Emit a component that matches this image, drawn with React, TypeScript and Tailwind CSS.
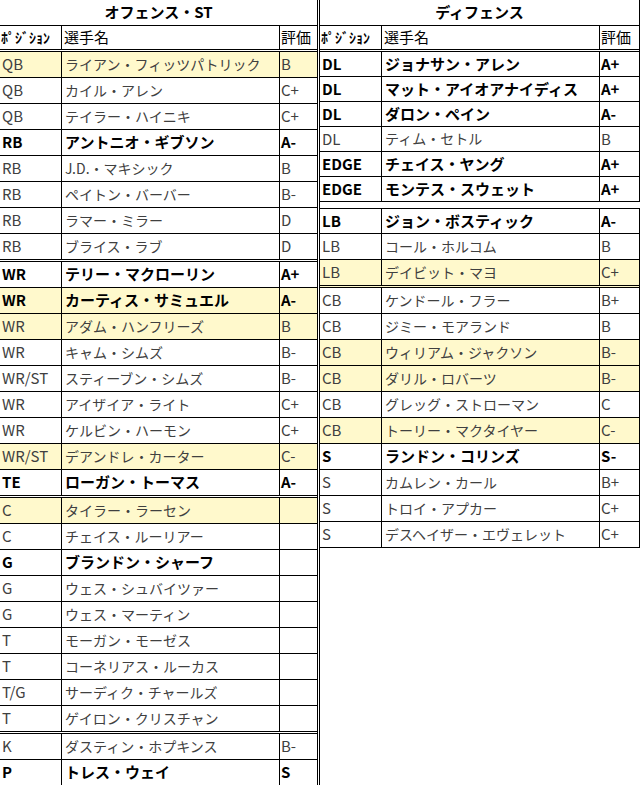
import React from "react";

type Row = {
  pos: string;
  name: string;
  grade?: string;
  bold?: boolean;
  hl?: boolean;
  h: string;
  dbl?: boolean;
};

const font = { fontFamily: '"Noto Sans CJK JP", "Noto Sans", sans-serif' };

const offense: Row[][] = [
  [
    { pos: "QB", name: "ライアン・フィッツパトリック", grade: "B", hl: true, h: "h-[26px]" },
    { pos: "QB", name: "カイル・アレン", grade: "C+", h: "h-[26px]" },
    { pos: "QB", name: "テイラー・ハイニキ", grade: "C+", h: "h-[26px]" },
    { pos: "RB", name: "アントニオ・ギブソン", grade: "A-", bold: true, h: "h-[26px]" },
    { pos: "RB", name: "J.D.・マキシック", grade: "B", h: "h-[26px]" },
    { pos: "RB", name: "ペイトン・バーバー", grade: "B-", h: "h-[26px]" },
    { pos: "RB", name: "ラマー・ミラー", grade: "D", h: "h-[26px]" },
    { pos: "RB", name: "ブライス・ラブ", grade: "D", h: "h-[28px]", dbl: true },
  ],
  [
    { pos: "WR", name: "テリー・マクローリン", grade: "A+", bold: true, h: "h-[26px]" },
    { pos: "WR", name: "カーティス・サミュエル", grade: "A-", bold: true, hl: true, h: "h-[26px]" },
    { pos: "WR", name: "アダム・ハンフリーズ", grade: "B", hl: true, h: "h-[26px]" },
    { pos: "WR", name: "キャム・シムズ", grade: "B-", h: "h-[26px]" },
    { pos: "WR/ST", name: "スティーブン・シムズ", grade: "B-", h: "h-[26px]" },
    { pos: "WR", name: "アイザイア・ライト", grade: "C+", h: "h-[26px]" },
    { pos: "WR", name: "ケルビン・ハーモン", grade: "C+", h: "h-[26px]" },
    { pos: "WR/ST", name: "デアンドレ・カーター", grade: "C-", hl: true, h: "h-[26px]" },
    { pos: "TE", name: "ローガン・トーマス", grade: "A-", bold: true, h: "h-[28px]", dbl: true },
  ],
  [
    { pos: "C", name: "タイラー・ラーセン", hl: true, h: "h-[26px]" },
    { pos: "C", name: "チェイス・ルーリアー", h: "h-[26px]" },
    { pos: "G", name: "ブランドン・シャーフ", bold: true, h: "h-[26px]" },
    { pos: "G", name: "ウェス・シュバイツァー", h: "h-[26px]" },
    { pos: "G", name: "ウェス・マーティン", h: "h-[26px]" },
    { pos: "T", name: "モーガン・モーゼス", h: "h-[26px]" },
    { pos: "T", name: "コーネリアス・ルーカス", h: "h-[26px]" },
    { pos: "T/G", name: "サーディク・チャールズ", h: "h-[26px]" },
    { pos: "T", name: "ゲイロン・クリスチャン", h: "h-[28px]", dbl: true },
  ],
  [
    { pos: "K", name: "ダスティン・ホプキンス", grade: "B-", h: "h-[26px]" },
    { pos: "P", name: "トレス・ウェイ", grade: "S", bold: true, h: "h-[26px]" },
  ],
];

const defenseTop: Row[] = [
  { pos: "DL", name: "ジョナサン・アレン", grade: "A+", bold: true, h: "h-[25px]" },
  { pos: "DL", name: "マット・アイオアナイディス", grade: "A+", bold: true, h: "h-[25px]" },
  { pos: "DL", name: "ダロン・ペイン", grade: "A-", bold: true, h: "h-[25px]" },
  { pos: "DL", name: "ティム・セトル", grade: "B", h: "h-[25px]" },
  { pos: "EDGE", name: "チェイス・ヤング", grade: "A+", bold: true, h: "h-[25px]" },
  { pos: "EDGE", name: "モンテス・スウェット", grade: "A+", bold: true, h: "h-[25px]" },
];

const defenseBottom: Row[] = [
  { pos: "LB", name: "ジョン・ボスティック", grade: "A-", bold: true, h: "h-[25px]" },
  { pos: "LB", name: "コール・ホルコム", grade: "B", h: "h-[26px]" },
  { pos: "LB", name: "デイビット・マヨ", grade: "C+", hl: true, h: "h-[28px]", dbl: true },
  { pos: "CB", name: "ケンドール・フラー", grade: "B+", h: "h-[26px]" },
  { pos: "CB", name: "ジミー・モアランド", grade: "B", h: "h-[26px]" },
  { pos: "CB", name: "ウィリアム・ジャクソン", grade: "B-", hl: true, h: "h-[26px]" },
  { pos: "CB", name: "ダリル・ロバーツ", grade: "B-", hl: true, h: "h-[26px]" },
  { pos: "CB", name: "グレッグ・ストローマン", grade: "C", h: "h-[26px]" },
  { pos: "CB", name: "トーリー・マクタイヤー", grade: "C-", hl: true, h: "h-[26px]" },
  { pos: "S", name: "ランドン・コリンズ", grade: "S-", bold: true, h: "h-[26px]" },
  { pos: "S", name: "カムレン・カール", grade: "B+", h: "h-[26px]" },
  { pos: "S", name: "トロイ・アプカー", grade: "C+", h: "h-[26px]" },
  { pos: "S", name: "デスヘイザー・エヴェレット", grade: "C+", h: "h-[26px]" },
];

const PlayerRow = ({ row, gradeW }: { row: Row; gradeW: string }) => {
  const border = row.dbl ? "border-b-[3px] border-double" : "border-b";
  const bg = row.hl ? "bg-[#fff9cc]" : "bg-white";
  const tone = row.bold ? "font-bold text-black" : "font-normal text-[#404040]";
  return (
    <div className={`flex ${row.h} ${border} border-black ${bg} ${tone}`}>
      <div className="w-[62px] shrink-0 border-r border-black pl-[2px] pb-[2px] flex items-center text-[15px] leading-none">
        {row.pos}
      </div>
      <div
        className={`w-[218px] shrink-0 border-r border-black pl-[3px] pb-[2px] flex items-center leading-none ${
          row.bold ? "text-[15px]" : "text-[14px]"
        }`}
      >
        {row.name}
      </div>
      <div className={`${gradeW} pl-[1px] pb-[2px] flex items-center text-[15px] leading-none`}>{row.grade}</div>
    </div>
  );
};

const Header = ({ title, gradeW }: { title: string; gradeW: string }) => (
  <>
    <div className="h-[26px] border-b border-black flex items-center justify-center pb-[2px] text-[15px] font-bold text-black leading-none">
      {title}
    </div>
    <div className="flex h-[26px] border-b-[3px] border-double border-black text-black">
      <div className="w-[62px] shrink-0 border-r border-black pl-[1px] pb-[2px] flex items-center text-[14px] font-bold leading-none">
        ﾎﾟｼﾞｼｮﾝ
      </div>
      <div className="w-[218px] shrink-0 border-r border-black pl-[2px] pb-[2px] flex items-center text-[15px] leading-none">
        選手名
      </div>
      <div className={`${gradeW} pl-[1px] pb-[2px] flex items-center text-[15px] leading-none`}>評価</div>
    </div>
  </>
);

export default function App() {
  return (
    <div className="w-[640px] h-[785px] overflow-hidden bg-white flex" style={font}>
      <div className="w-[320px] shrink-0 border-r-[3px] border-double border-black">
        <Header title="オフェンス・ST" gradeW="w-[37px]" />
        {offense.map((group, gi) => (
          <div key={gi}>
            {group.map((row, i) => (
              <PlayerRow key={i} row={row} gradeW="w-[37px]" />
            ))}
          </div>
        ))}
      </div>

      <div className="w-[320px] shrink-0">
        <div className="border-r border-black">
          <Header title="ディフェンス" gradeW="w-[39px]" />
          {defenseTop.map((row, i) => (
            <PlayerRow key={i} row={row} gradeW="w-[39px]" />
          ))}
        </div>
        <div className="h-[6px]" />
        <div className="border-t border-r border-black">
          {defenseBottom.map((row, i) => (
            <PlayerRow key={i} row={row} gradeW="w-[39px]" />
          ))}
        </div>
      </div>
    </div>
  );
}
